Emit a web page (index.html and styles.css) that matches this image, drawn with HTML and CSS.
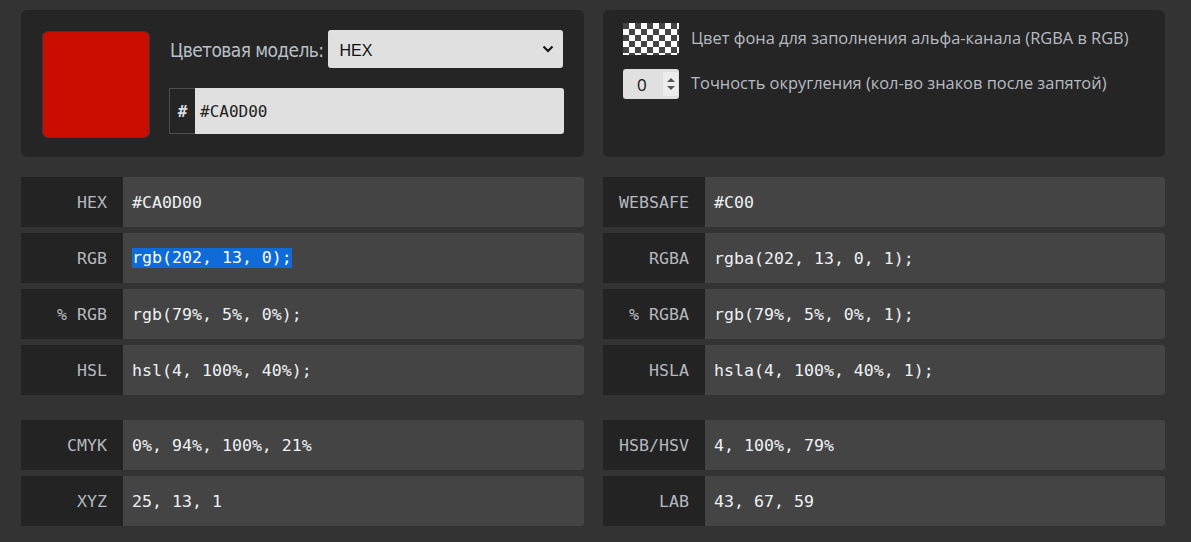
FILE: index.html
```html
<!DOCTYPE html>
<html lang="ru">
<head>
<meta charset="utf-8">
<title>Color</title>
<link rel="stylesheet" href="styles.css">
</head>
<body>
<div class="page">
  <div class="panel panel-main">
    <div class="swatch"></div>
    <div class="controls">
      <div class="model-row">
        <span class="model-label">Цветовая модель:</span>
        <div class="select">
          <span class="select-text">HEX</span>
          <svg class="chev" width="12" height="8" viewBox="0 0 12 8"><path d="M1.5 1.5 L6 6 L10.5 1.5" fill="none" stroke="#111" stroke-width="2"/></svg>
        </div>
      </div>
      <div class="input-group">
        <span class="hash">#</span>
        <div class="hex-input">#CA0D00</div>
      </div>
    </div>
  </div>
  <div class="panel panel-opts">
    <div class="opt">
      <div class="checker"></div>
      <span class="opt-text">Цвет фона для заполнения альфа-канала (RGBA в RGB)</span>
    </div>
    <div class="opt">
      <div class="num">
        <span class="num-val">0</span>
        <span class="spin">
          <svg width="12" height="18" viewBox="0 0 12 18"><path d="M2 7 L6 3 L10 7 Z" fill="#555"/><path d="M2 11 L6 15 L10 11 Z" fill="#555"/></svg>
        </span>
      </div>
      <span class="opt-text">Точность округления (кол-во знаков после запятой)</span>
    </div>
  </div>

  <div class="group">
    <div class="row"><div class="lab">HEX</div><div class="val">#CA0D00</div></div>
    <div class="row"><div class="lab">RGB</div><div class="val"><span class="sel">rgb(202, 13, 0);</span></div></div>
    <div class="row"><div class="lab">% RGB</div><div class="val">rgb(79%, 5%, 0%);</div></div>
    <div class="row"><div class="lab">HSL</div><div class="val">hsl(4, 100%, 40%);</div></div>
  </div>
  <div class="group">
    <div class="row"><div class="lab">WEBSAFE</div><div class="val">#C00</div></div>
    <div class="row"><div class="lab">RGBA</div><div class="val">rgba(202, 13, 0, 1);</div></div>
    <div class="row"><div class="lab">% RGBA</div><div class="val">rgb(79%, 5%, 0%, 1);</div></div>
    <div class="row"><div class="lab">HSLA</div><div class="val">hsla(4, 100%, 40%, 1);</div></div>
  </div>

  <div class="group group2">
    <div class="row"><div class="lab">CMYK</div><div class="val">0%, 94%, 100%, 21%</div></div>
    <div class="row"><div class="lab">XYZ</div><div class="val">25, 13, 1</div></div>
  </div>
  <div class="group group2">
    <div class="row"><div class="lab">HSB/HSV</div><div class="val">4, 100%, 79%</div></div>
    <div class="row"><div class="lab">LAB</div><div class="val">43, 67, 59</div></div>
  </div>
</div>
</body>
</html>
```
FILE: styles.css
```css
html, body {
  margin: 0;
  padding: 0;
  background: #333333;
}
body {
  padding: 10px 0 0 21px;
  font-family: "DejaVu Sans Mono", monospace;
}
.page {
  display: grid;
  grid-template-columns: 563px 562px;
  column-gap: 19px;
}
.panel {
  background: #252525;
  border-radius: 6px;
  height: 147px;
  box-sizing: border-box;
}
.panel-main {
  display: flex;
  padding: 20px 20px 0 20px;
}
.swatch {
  width: 108px;
  height: 107px;
  box-sizing: border-box;
  background: #ca0d00;
  border: 1px solid #3a3a3a;
  border-radius: 6px;
  margin-top: 1px;
  margin-left: 1px;
}
.controls {
  margin-left: 19px;
  flex: 1;
  display: flex;
  flex-direction: column;
}
.model-row {
  display: flex;
  align-items: center;
  height: 38px;
}
.model-label {
  font-family: "DejaVu Sans Condensed", "DejaVu Sans", sans-serif;
  font-size: 19px;
  letter-spacing: -0.6px;
  color: #b9c0c8;
  margin-left: 1px;
  margin-right: 5px;
  white-space: nowrap;
  padding-top: 1px;
}
.select {
  flex: 1;
  height: 38px;
  margin-right: 1px;
  background: #e0e0e0;
  border-radius: 3px;
  display: flex;
  align-items: center;
  justify-content: space-between;
  padding: 3px 9px 0 11px;
  box-sizing: border-box;
  font-family: "Liberation Sans", sans-serif;
  font-size: 16px;
  color: #111;
}
.chev { display: block; margin-top: -3px; }
.input-group {
  margin-top: 20px;
  display: flex;
  height: 46px;
}
.hash {
  width: 26px;
  box-sizing: border-box;
  border: 1px solid #4d4d4d;
  border-right: none;
  display: flex;
  align-items: center;
  justify-content: center;
  color: #d8dde4;
  font-size: 16px;
  font-weight: bold;
}
.hex-input {
  flex: 1;
  background: #e0e0e0;
  border-radius: 0 3px 3px 0;
  display: flex;
  align-items: center;
  padding-left: 5px;
  font-size: 16px;
  color: #222;
}
.panel-opts {
  padding: 13px 20px 0 20px;
  display: flex;
  flex-direction: column;
  gap: 14px;
}
.opt {
  display: flex;
  align-items: center;
}
.checker {
  width: 56px;
  height: 32px;
  background-color: #fff;
  background-image: conic-gradient(#fff 25%, #444 0 50%, #fff 0 75%, #444 0);
  background-size: 12px 12px;
  background-position: 0 0;
  flex: none;
}
.opt-text {
  margin-left: 12px;
  font-family: "Open Sans", sans-serif;
  font-size: 16.4px;
  color: #b7bcc2;
  white-space: nowrap;
  margin-top: -3px;
}
.num {
  width: 56px;
  height: 30px;
  background: #e0e0e0;
  border-radius: 3px;
  display: flex;
  align-items: center;
  flex: none;
  box-sizing: border-box;
  padding-left: 14px;
}
.num-val {
  font-family: "Open Sans", sans-serif;
  font-size: 17px;
  color: #111;
  width: 26px;
}
.spin {
  width: 15px;
  height: 24px;
  background: #ececec;
  display: flex;
  align-items: center;
  justify-content: center;
}
.spin svg { display: block; }
.group {
  margin-top: 20px;
  display: flex;
  flex-direction: column;
  gap: 6px;
}
.group2 {
  margin-top: 25px;
}
.row {
  display: flex;
  height: 50px;
}
.lab {
  width: 102px;
  flex: none;
  background: #232323;
  color: #b4b9bf;
  font-size: 16.6px;
  text-align: right;
  box-sizing: border-box;
  padding-right: 16px;
  display: flex;
  align-items: center;
  justify-content: flex-end;
}
.val {
  flex: 1;
  background: #444444;
  border-radius: 0 3px 3px 0;
  color: #eef1f4;
  font-size: 16.6px;
  display: flex;
  align-items: center;
  padding-left: 9px;
  white-space: pre;
}
.sel {
  background: #0e6bd8;
  color: #fff;
  line-height: 20px;
}
```
